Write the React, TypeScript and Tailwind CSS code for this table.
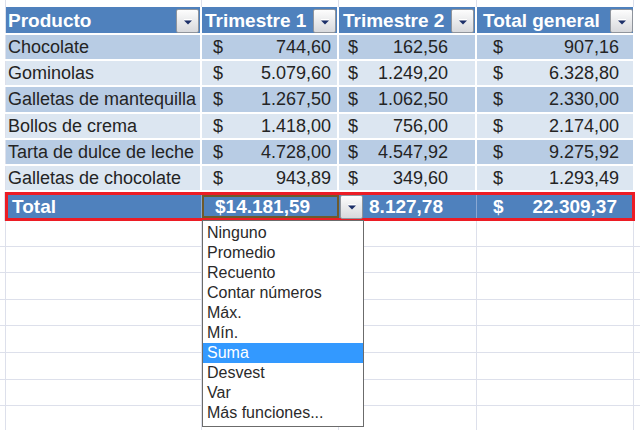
import React from "react";

const rows = [
  { name: "Chocolate", b: "744,60", c: "162,56", d: "907,16", bg: "bg-[#b8cce4]" },
  { name: "Gominolas", b: "5.079,60", c: "1.249,20", d: "6.328,80", bg: "bg-[#dce6f1]" },
  { name: "Galletas de mantequilla", b: "1.267,50", c: "1.062,50", d: "2.330,00", bg: "bg-[#b8cce4]" },
  { name: "Bollos de crema", b: "1.418,00", c: "756,00", d: "2.174,00", bg: "bg-[#dce6f1]" },
  { name: "Tarta de dulce de leche", b: "4.728,00", c: "4.547,92", d: "9.275,92", bg: "bg-[#b8cce4]" },
  { name: "Galletas de chocolate", b: "943,89", c: "349,60", d: "1.293,49", bg: "bg-[#dce6f1]" },
];

const menu = [
  "Ninguno",
  "Promedio",
  "Recuento",
  "Contar números",
  "Máx.",
  "Mín.",
  "Suma",
  "Desvest",
  "Var",
  "Más funciones...",
];

function DropButton() {
  return (
    <div className="w-[23px] h-[24px] shrink-0 border border-[#8f949c] rounded-[2px] bg-gradient-to-b from-[#fdfdfd] to-[#d8d9dc] flex items-center justify-center">
      <svg width="10" height="7" viewBox="0 0 10 7">
        <path d="M1 1.5h8" stroke="#ffffff" strokeWidth="1" />
        <path d="M1 2.5h8L5 6.5z" fill="#1d2f68" />
      </svg>
    </div>
  );
}

function GridRow({ h }: { h: string }) {
  return (
    <div className={`flex ${h} border-b border-[#dde0eb]`}>
      <div className="w-[6px] border-r border-[#dde0eb]" />
      <div className="w-[196px] border-r border-[#dde0eb]" />
      <div className="w-[137px] border-r border-[#dde0eb]" />
      <div className="w-[138px] border-r border-[#dde0eb]" />
      <div className="w-[157px] border-r border-[#dde0eb]" />
    </div>
  );
}

export default function App() {
  return (
    <div className="relative w-[640px] h-[430px] overflow-hidden bg-white font-['Liberation_Sans',Arial,sans-serif] text-[18px] text-[#242424] leading-none">
      {/* row above the table */}
      <div className="flex h-[7px]">
        <div className="w-[6px] border-r border-[#dde0eb]" />
        <div className="w-[196px] border-r border-[#dde0eb]" />
        <div className="w-[137px] border-r border-[#dde0eb]" />
        <div className="w-[138px] border-r border-[#dde0eb]" />
        <div className="w-[157px] border-r border-[#dde0eb]" />
      </div>

      {/* header */}
      <div className="flex h-[28px] border-b-2 border-white text-white font-bold text-[19px]">
        <div className="w-[6px] border-r border-[#dde0eb]" />
        <div className="w-[196px] bg-[#4f81bd] border-r-2 border-white flex items-end justify-between pl-[2px] pr-[1px]">
          <span className="self-center">Producto</span>
          <DropButton />
        </div>
        <div className="w-[137px] bg-[#4f81bd] border-r-2 border-white flex items-end justify-between pl-[3px] pr-[1px]">
          <span className="self-center">Trimestre 1</span>
          <DropButton />
        </div>
        <div className="w-[138px] bg-[#4f81bd] border-r-2 border-white flex items-end justify-between pl-[4px] pr-[1px]">
          <span className="self-center">Trimestre 2</span>
          <DropButton />
        </div>
        <div className="w-[156px] bg-[#4f81bd] flex items-end justify-between pl-[6px]">
          <span className="self-center">Total general</span>
          <DropButton />
        </div>
      </div>

      {/* data rows */}
      {rows.map((r) => (
        <div key={r.name} className="flex h-[26.2px] border-b-2 border-white">
          <div className="w-[6px] border-r border-[#dde0eb]" />
          <div className={`w-[196px] ${r.bg} border-r-2 border-white flex items-center pl-[2px] whitespace-nowrap overflow-hidden`}>
            {r.name}
          </div>
          <div className={`w-[137px] ${r.bg} border-r-2 border-white flex items-center justify-between pl-[11px] pr-[6px]`}>
            <span>$</span>
            <span>{r.b}</span>
          </div>
          <div className={`w-[138px] ${r.bg} border-r-2 border-white flex items-center justify-between pl-[9px] pr-[27px]`}>
            <span>$</span>
            <span>{r.c}</span>
          </div>
          <div className={`w-[156px] ${r.bg} flex items-center justify-between pl-[16px] pr-[14px]`}>
            <span>$</span>
            <span>{r.d}</span>
          </div>
        </div>
      ))}

      {/* total row with red highlight */}
      <div className="flex h-[29px] mt-[-0.2px]">
        <div className="w-[5px] border-r border-[#dde0eb]" />
        <div className="w-[630px] border-[3px] border-[#ec1c24] flex text-white font-bold text-[19px]">
          <div className="w-[194px] bg-[#4f81bd] border-r border-[#8aa8d3] flex items-center pl-[4px]">Total</div>
          <div className="w-[137px] bg-[#4f81bd] border-2 border-[#6e5a2c] flex items-center pl-[11px]">$14.181,59</div>
          <div className="relative w-[138px] bg-[#4f81bd] border-r border-[#8aa8d3] flex items-center justify-end pr-[33px]">
            <span>8.127,78</span>
            <div className="absolute left-[1px] top-0">
              <DropButton />
            </div>
          </div>
          <div className="w-[155px] bg-[#4f81bd] flex items-center justify-between pl-[16px] pr-[15px]">
            <span>$</span>
            <span>22.309,37</span>
          </div>
        </div>
      </div>

      {/* empty sheet rows */}
      <GridRow h="h-[25.6px]" />
      {Array.from({ length: 8 }).map((_, i) => (
        <GridRow key={i} h="h-[26.6px]" />
      ))}

      {/* totals function list */}
      <div className="absolute left-[202px] top-[220px] w-[162px] h-[207px] bg-white border border-[#6b6b6b] pt-[2px] text-[16px] text-[#2a2a2a]">
        {menu.map((m) => (
          <div
            key={m}
            className={`h-[20px] flex items-center pl-[4px] ${m === "Suma" ? "bg-[#3399ff] text-white" : ""}`}
          >
            {m}
          </div>
        ))}
      </div>
    </div>
  );
}
